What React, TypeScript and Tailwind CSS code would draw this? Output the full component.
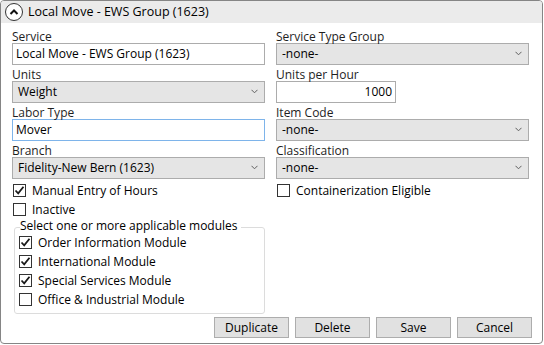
import React from "react";

const font = { fontFamily: '"Segoe UI", "Open Sans", "Noto Sans", sans-serif' };

function Label({ text }: { text: string }) {
  return <div className="h-[13px] leading-[13px] text-[12px] text-[#1e1e1e]">{text}</div>;
}

function TextBox({ value, focused, right, width }: { value: string; focused?: boolean; right?: boolean; width?: string }) {
  return (
    <div
      className={`h-[22px] border bg-white px-[3px] text-[12px] leading-[20px] text-black ${
        focused ? "border-[#7eb4ea]" : "border-[#acacac]"
      } ${right ? "text-right" : ""} ${width ?? "w-full"}`}
    >
      {value}
    </div>
  );
}

function Select({ value }: { value: string }) {
  return (
    <div className="flex h-[22px] w-full items-center justify-between border border-[#acacac] bg-[#e5e5e5] pl-[5px] pr-[6px] text-[12px] text-black">
      <span>{value}</span>
      <svg width="7" height="5" viewBox="0 0 7 5" className="mt-[-1px]">
        <path d="M0.5 0.8 L3.5 3.8 L6.5 0.8" fill="none" stroke="#606060" strokeWidth="1" />
      </svg>
    </div>
  );
}

function Check({ label, checked }: { label: string; checked?: boolean }) {
  return (
    <div className="flex h-[19px] items-center gap-[6px] text-[12px] text-black">
      <div className="flex h-[13px] w-[13px] items-center justify-center border border-[#333333] bg-white">
        {checked && (
          <svg width="11" height="11" viewBox="0 0 11 11">
            <path d="M1.5 5.5 L4.2 8.3 L9.5 1.8" fill="none" stroke="#1a1a1a" strokeWidth="1.8" />
          </svg>
        )}
      </div>
      <span>{label}</span>
    </div>
  );
}

function Btn({ text }: { text: string }) {
  return (
    <div className="flex h-[21px] w-[75px] items-center justify-center border border-[#adadad] bg-[#e1e1e1] text-[12px] text-black">
      {text}
    </div>
  );
}

export default function App() {
  return (
    <div style={font} className="h-[345px] w-[544px] bg-white">
      <div className="flex h-[344px] w-[543px] flex-col overflow-hidden rounded-[4px] border border-[#858585]">
        {/* Header */}
        <div className="flex h-[22px] items-center gap-[5px] bg-[#ebebeb] pl-[4px] text-[12.5px] text-black">
          <div className="flex h-[18px] w-[18px] items-center justify-center rounded-full border border-[#333333] bg-white">
            <svg width="10" height="8" viewBox="0 0 10 8">
              <path d="M1.5 6 L5 2.5 L8.5 6" fill="none" stroke="#111" strokeWidth="2" />
            </svg>
          </div>
          <span>Local Move - EWS Group (1623)</span>
        </div>

        <div className="flex gap-[11px] pl-[11px] pt-[7px]">
          {/* Left column */}
          <div className="w-[253px]">
            <div className="flex flex-col gap-[3px]">
              <div>
                <Label text="Service" />
                <TextBox value="Local Move - EWS Group (1623)" />
              </div>
              <div>
                <Label text="Units" />
                <Select value="Weight" />
              </div>
              <div>
                <Label text="Labor Type" />
                <TextBox value="Mover" focused />
              </div>
              <div>
                <Label text="Branch" />
                <Select value="Fidelity-New Bern (1623)" />
              </div>
            </div>
            <div className="ml-[1px] mt-[2px]">
              <Check label="Manual Entry of Hours" checked />
              <Check label="Inactive" />
            </div>
            <div className="relative ml-[2px] mt-[8px] w-[251px] rounded-[3px] border border-[#dcdcdc] pb-[4px] pl-[4px] pt-[5px]">
              <div className="absolute left-[5px] top-[-9px] bg-white pr-[3px] text-[12px] leading-[14px] text-black">
                Select one or more applicable modules
              </div>
              <Check label="Order Information Module" checked />
              <Check label="International Module" checked />
              <Check label="Special Services Module" checked />
              <Check label="Office & Industrial Module" />
            </div>
          </div>

          {/* Right column */}
          <div className="w-[253px]">
            <div className="flex flex-col gap-[3px]">
              <div>
                <Label text="Service Type Group" />
                <Select value="-none-" />
              </div>
              <div>
                <Label text="Units per Hour" />
                <TextBox value="1000" right width="w-[120px]" />
              </div>
              <div>
                <Label text="Item Code" />
                <Select value="-none-" />
              </div>
              <div>
                <Label text="Classification" />
                <Select value="-none-" />
              </div>
            </div>
            <div className="ml-[1px] mt-[2px]">
              <Check label="Containerization Eligible" />
            </div>
          </div>
        </div>

        {/* Buttons */}
        <div className="mt-auto mb-[5px] flex justify-end gap-[6px] pr-[10px]">
          <Btn text="Duplicate" />
          <Btn text="Delete" />
          <Btn text="Save" />
          <Btn text="Cancel" />
        </div>
      </div>
    </div>
  );
}
